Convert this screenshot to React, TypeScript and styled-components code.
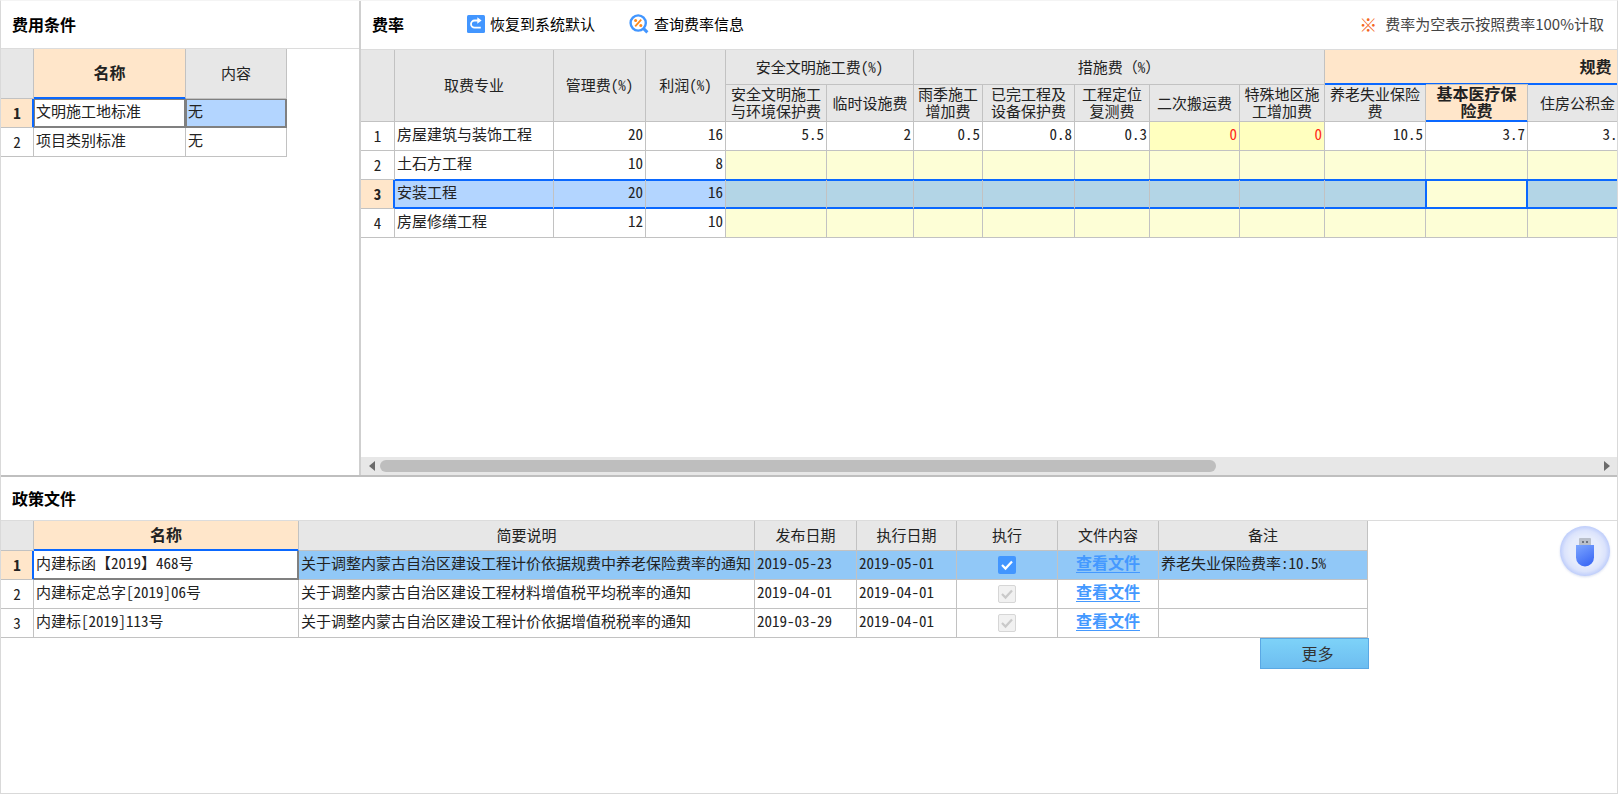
import React from 'react';
import styled, { createGlobalStyle, css } from 'styled-components';

const LINE = '#c2c2c2';
const BLUE = '#0a68ff';
const HEAD = '#e7e7e7';
const PEACH = '#ffe6ca';
const YELLOW = '#fdfed6';
const DARK = '#808080';

const GlobalStyle = createGlobalStyle`
  *, *::before, *::after { box-sizing: border-box; }
  body {
    margin: 0;
    background: #fff;
    color: #222;
    font-family: "Noto Sans CJK SC", "Liberation Sans", sans-serif;
    font-size: 15px;
    line-height: 17px;
  }
`;

const Page = styled.main`
  position: relative;
  display: grid;
  grid-template-rows: 60vh 1fr;
  grid-template-columns: minmax(0, 1fr);
  min-height: 100vh;
  border: 1px solid #d9d9d9;
  border-top-color: #f4f4f4;
`;

const TopPane = styled.div`
  display: flex;
  min-height: 0;
  border-bottom: 2px solid #bfbfbf;
`;

const Panel = styled.section`
  display: flex;
  flex-direction: column;
  min-width: 0;
`;

const ConditionPanel = styled(Panel)`
  flex: 0 0 360px;
  border-right: 2px solid #cfcfcf;
`;

const RatePanel = styled(Panel)`
  flex: 1;
`;

const PanelHeader = styled.header<{ $height: number }>`
  display: flex;
  align-items: center;
  flex: none;
  height: ${(p) => p.$height}px;
  padding: 0 13px 2px 11px;
  border-bottom: 1px solid #dcdcdc;
  color: #000;
`;

const Title = styled.h2`
  margin: 0;
  font-size: 16px;
  line-height: 20px;
  font-weight: 700;
`;

const Tools = styled.div`
  display: flex;
  gap: 34px;
  margin-left: 63px;
`;

const ToolButton = styled.button`
  display: flex;
  align-items: center;
  gap: 5px;
  padding: 0;
  border: 0;
  background: none;
  color: #000;
  font: inherit;
  line-height: 20px;
  white-space: nowrap;
  cursor: pointer;
`;

const Note = styled.p`
  display: flex;
  gap: 8px;
  margin: 0 0 0 auto;
  color: #444;
  line-height: 20px;
  white-space: nowrap;
`;

const NoteMark = styled.span`
  color: #f4661e;
  font-size: 18px;
`;

const TableArea = styled.div`
  flex: 1;
  min-height: 0;
  overflow: hidden;
`;

const Grid = styled.table<{ $width: number }>`
  width: ${(p) => p.$width}px;
  table-layout: fixed;
  border-collapse: separate;
  border-spacing: 0;
  font-feature-settings: "hwid" 1;
`;

const FullWidth = styled.span`
  font-feature-settings: normal;
`;

const HeadRow = styled.tr<{ $height: number }>`
  height: ${(p) => p.$height}px;
`;

const HeadCell = styled.th<{ $active?: boolean; $nested?: boolean }>`
  padding: 0 3px 2px;
  border-right: 1px solid ${LINE};
  border-bottom: 1px solid ${LINE};
  background: ${HEAD};
  font-weight: 400;
  ${(p) =>
    p.$active &&
    css`
      background: ${PEACH};
      border-bottom-color: ${BLUE};
      box-shadow: inset 0 -1px 0 ${BLUE};
      font-size: 16px;
      font-weight: 700;
    `}
  ${(p) =>
    p.$active &&
    p.$nested &&
    css`
      box-shadow: 0 -1px 0 ${LINE}, inset 0 -1px 0 ${BLUE};
    `}
`;

const BodyRow = styled.tr`
  height: 29px;
`;

const IndexCell = styled.th<{ $active?: boolean }>`
  padding: 0 0 2px;
  border-right: 1px solid ${LINE};
  border-bottom: 1px solid ${LINE};
  font-weight: 400;
  ${(p) =>
    p.$active &&
    css`
      background: ${PEACH};
      border-right-color: ${BLUE};
      box-shadow: inset -1px 0 0 ${BLUE};
      font-weight: 700;
    `}
`;

type Frame = 'row' | 'current' | 'dark' | 'corner';

const frames: Record<Frame, ReturnType<typeof css>> = {
  row: css`
    border-bottom-color: ${BLUE};
    box-shadow: 0 -1px 0 ${BLUE}, inset 0 1px 0 ${BLUE}, inset 0 -1px 0 ${BLUE};
  `,
  current: css`
    border-bottom-color: ${BLUE};
    border-right-color: ${BLUE};
    box-shadow: 0 -1px 0 ${BLUE}, -1px 0 0 ${BLUE}, inset 0 0 0 1px ${BLUE};
  `,
  dark: css`
    border-color: ${DARK};
    box-shadow: inset 0 0 0 1px ${DARK};
  `,
  corner: css`
    border-color: ${DARK};
    box-shadow: inset -1px -1px 0 ${DARK};
  `,
};

const Cell = styled.td<{
  $align?: 'left' | 'right' | 'center';
  $bg?: string;
  $ink?: string;
  $frame?: Frame;
}>`
  padding: 0 2px 5px;
  border-right: 1px solid ${LINE};
  border-bottom: 1px solid ${LINE};
  background: ${(p) => p.$bg ?? '#fff'};
  color: ${(p) => p.$ink ?? 'inherit'};
  text-align: ${(p) => p.$align ?? 'left'};
  white-space: nowrap;
  ${(p) => p.$frame && frames[p.$frame]}
`;

const ScrollBar = styled.div`
  display: flex;
  align-items: center;
  flex: none;
  gap: 5px;
  height: 18px;
  padding: 0 7px 0 8px;
  background: ${HEAD};
`;

const ScrollTrack = styled.div`
  flex: 1;
  height: 12px;
`;

const ScrollThumb = styled.div`
  width: 68.6%;
  height: 12px;
  border-radius: 6px;
  background: #bebebe;
`;

const PolicyBody = styled.div`
  display: flex;
  flex-direction: column;
  align-self: flex-start;
`;

const FileLink = styled.a`
  color: #4499ff;
  font-size: 16px;
  font-weight: 700;
  text-decoration: underline;
  text-underline-offset: 3px;
  text-decoration-thickness: 1px;
`;

const Check = styled.label`
  display: inline-grid;
  width: 18px;
  height: 18px;
  vertical-align: middle;
  margin-top: 4px;

  input,
  svg {
    grid-area: 1 / 1;
    width: 18px;
    height: 18px;
    margin: 0;
  }
  input {
    appearance: none;
    border-radius: 2px;
    background: #4296ff;
  }
  input:disabled {
    border: 1px solid #d6d6d6;
    background: #f1f1f1;
  }
  svg {
    pointer-events: none;
    color: #fff;
  }
  input:disabled + svg {
    color: #c9c9c9;
  }
`;

const MoreButton = styled.button`
  align-self: flex-end;
  width: 109px;
  height: 31px;
  margin-right: -1px;
  padding: 0 0 0 6px;
  border: 1px solid #5aa8e4;
  background: linear-gradient(#7dd2f8, #6dbdf0);
  color: #333;
  font: inherit;
  font-size: 16px;
  cursor: pointer;
`;

const DeviceButton = styled.button`
  position: absolute;
  right: 4px;
  bottom: 212px;
  width: 56px;
  height: 58px;
  padding: 0;
  border: 0;
  background: none;
  cursor: pointer;

  svg {
    display: block;
  }
`;

const Columns = ({ widths }: { widths: number[] }) => (
  <colgroup>
    {widths.map((w, i) => (
      <col key={i} style={{ width: w }} />
    ))}
  </colgroup>
);

const sum = (values: number[]) => values.reduce((a, b) => a + b, 0);

const ResetIcon = () => (
  <svg width="18" height="18" viewBox="0 0 18 18" aria-hidden="true">
    <rect width="18" height="18" rx="1.5" fill="#4296ff" />
    <path d="M11 5.5H7.6a3.6 3.6 0 0 0 0 7.2h6.2" fill="none" stroke="#fff" strokeWidth="1.8" />
    <path d="M10.3 2.3 14.6 5.5l-4.3 3.2z" fill="#fff" />
  </svg>
);

const QueryIcon = () => (
  <svg width="20" height="20" viewBox="0 0 20 20" aria-hidden="true">
    <circle cx="9.2" cy="9" r="7.6" fill="#fff" stroke="#4296ff" strokeWidth="2.4" />
    <path d="m14.6 14.6 3.8 3.8" stroke="#4296ff" strokeWidth="3" />
    <path d="m12.2 5.6-6 6.8" stroke="#ff8a1c" strokeWidth="1.8" />
    <circle cx="6.6" cy="6.6" r="1.5" fill="#ff8a1c" />
    <circle cx="11.8" cy="11.4" r="1.5" fill="#ff8a1c" />
  </svg>
);

const DeviceIcon = () => (
  <svg width="56" height="58" viewBox="0 0 56 58" aria-hidden="true">
    <defs>
      <radialGradient id="halo">
        <stop offset="0.6" stopColor="#e6ecfc" />
        <stop offset="0.82" stopColor="#dbe3fc" />
        <stop offset="1" stopColor="#becdfb" />
      </radialGradient>
      <linearGradient id="stick" x1="0" y1="0" x2="0.5" y2="1">
        <stop offset="0" stopColor="#7da6ff" />
        <stop offset="1" stopColor="#3f6cf5" />
      </linearGradient>
      <filter id="shade" x="-20%" y="-20%" width="140%" height="140%">
        <feDropShadow dx="0" dy="1" stdDeviation="1.2" floodColor="#8fa2d8" floodOpacity="0.35" />
      </filter>
    </defs>
    <circle cx="28" cy="28" r="25" fill="url(#halo)" filter="url(#shade)" />
    <rect x="22" y="15" width="12" height="8" rx="1" fill="#b9bfca" />
    <rect x="25" y="18" width="2" height="2" fill="#6d7482" />
    <rect x="29" y="18" width="2" height="2" fill="#6d7482" />
    <path d="M19 22h18v12.500a9 9 0 0 1-18 0z" fill="url(#stick)" />
  </svg>
);

const CheckMark = () => (
  <svg viewBox="0 0 18 18" aria-hidden="true">
    <path d="m4 9 3.500 3.600L14 5.400" fill="none" stroke="currentColor" strokeWidth="2.200" />
  </svg>
);

const conditionCols = [33, 152, 101];
const conditions = [
  { name: '文明施工地标准', value: '无' },
  { name: '项目类别标准', value: '无' },
];

const ConditionTable = () => (
  <Grid $width={sum(conditionCols)}>
    <Columns widths={conditionCols} />
    <thead>
      <HeadRow $height={50}>
        <HeadCell aria-label="序号" />
        <HeadCell $active>名称</HeadCell>
        <HeadCell>内容</HeadCell>
      </HeadRow>
    </thead>
    <tbody>
      {conditions.map((row, i) => (
        <BodyRow key={row.name}>
          <IndexCell $active={i === 0}>{i + 1}</IndexCell>
          <Cell $frame={i === 0 ? 'dark' : undefined}>{row.name}</Cell>
          <Cell $frame={i === 0 ? 'dark' : undefined} $bg={i === 0 ? '#b3d5ff' : undefined}>
            {row.value}
          </Cell>
        </BodyRow>
      ))}
    </tbody>
  </Grid>
);

const rateCols = [34, 159, 92, 80, 101, 87, 69, 92, 75, 90, 85, 101, 102, 100, 239];
const CURRENT_COL = 9;
const SELECTED_ROW = 2;
const rates = [
  { name: '房屋建筑与装饰工程', manage: '20', profit: '16', fees: ['5.5', '2', '0.5', '0.8', '0.3', '0', '0', '10.5', '3.7', '3.7', ''] },
  { name: '土石方工程', manage: '10', profit: '8', fees: Array(11).fill('') },
  { name: '安装工程', manage: '20', profit: '16', fees: Array(11).fill('') },
  { name: '房屋修缮工程', manage: '12', profit: '10', fees: Array(11).fill('') },
];
const feeNames = [
  '安全文明施工与环境保护费',
  '临时设施费',
  '雨季施工增加费',
  '已完工程及设备保护费',
  '工程定位复测费',
  '二次搬运费',
  '特殊地区施工增加费',
  '养老失业保险费',
  '基本医疗保险费',
  '住房公积金',
  '',
];

const feeBackground = (value: string, selected: boolean, current: boolean) => {
  if (current) return YELLOW;
  if (selected) return '#b3d5e6';
  if (value === '0') return '#ffffbf';
  return value === '' ? YELLOW : '#fff';
};

const RateTable = () => (
  <Grid $width={sum(rateCols)}>
    <Columns widths={rateCols} />
    <thead>
      <HeadRow $height={35}>
        <HeadCell rowSpan={2} aria-label="序号" />
        <HeadCell rowSpan={2}>取费专业</HeadCell>
        <HeadCell rowSpan={2}>管理费(%)</HeadCell>
        <HeadCell rowSpan={2}>利润(%)</HeadCell>
        <HeadCell colSpan={2}>安全文明施工费(%)</HeadCell>
        <HeadCell colSpan={5}>
          措施费<FullWidth>（</FullWidth>%<FullWidth>）</FullWidth>
        </HeadCell>
        <HeadCell colSpan={4} $active>规费</HeadCell>
      </HeadRow>
      <HeadRow $height={37}>
        {feeNames.map((name, i) => (
          <HeadCell key={i} $active={i === CURRENT_COL - 1} $nested>
            {name}
          </HeadCell>
        ))}
      </HeadRow>
    </thead>
    <tbody>
      {rates.map((row, r) => {
        const selected = r === SELECTED_ROW;
        const frame: Frame | undefined = selected ? 'row' : undefined;
        const bg = selected ? '#b3d5ff' : undefined;
        return (
          <BodyRow key={row.name}>
            <IndexCell $active={selected}>{r + 1}</IndexCell>
            <Cell $frame={frame} $bg={bg}>{row.name}</Cell>
            <Cell $frame={frame} $bg={bg} $align="right">{row.manage}</Cell>
            <Cell $frame={frame} $bg={bg} $align="right">{row.profit}</Cell>
            {row.fees.map((value: string, c: number) => {
              const current = selected && c === CURRENT_COL - 1;
              return (
                <Cell
                  key={c}
                  $align="right"
                  $frame={current ? 'current' : frame}
                  $bg={feeBackground(value, selected, current)}
                  $ink={value === '0' ? '#ff2a1a' : undefined}
                >
                  {value}
                </Cell>
              );
            })}
          </BodyRow>
        );
      })}
    </tbody>
  </Grid>
);

const policyCols = [33, 265, 456, 102, 100, 101, 101, 209];
const policies = [
  { name: '内建标函【2019】468号', brief: '关于调整内蒙古自治区建设工程计价依据规费中养老保险费率的通知', issued: '2019-05-23', effective: '2019-05-01', remark: '养老失业保险费率:10.5%' },
  { name: '内建标定总字[2019]06号', brief: '关于调整内蒙古自治区建设工程材料增值税平均税率的通知', issued: '2019-04-01', effective: '2019-04-01', remark: '' },
  { name: '内建标[2019]113号', brief: '关于调整内蒙古自治区建设工程计价依据增值税税率的通知', issued: '2019-03-29', effective: '2019-04-01', remark: '' },
];

const PolicyTable = () => (
  <Grid $width={sum(policyCols)}>
    <Columns widths={policyCols} />
    <thead>
      <HeadRow $height={30}>
        <HeadCell aria-label="序号" />
        <HeadCell $active>名称</HeadCell>
        <HeadCell>简要说明</HeadCell>
        <HeadCell>发布日期</HeadCell>
        <HeadCell>执行日期</HeadCell>
        <HeadCell>执行</HeadCell>
        <HeadCell>文件内容</HeadCell>
        <HeadCell>备注</HeadCell>
      </HeadRow>
    </thead>
    <tbody>
      {policies.map((row, i) => {
        const bg = i === 0 ? '#91c8f7' : undefined;
        return (
          <BodyRow key={row.name}>
            <IndexCell $active={i === 0}>{i + 1}</IndexCell>
            <Cell $frame={i === 0 ? 'corner' : undefined}>{row.name}</Cell>
            <Cell $bg={bg}>{row.brief}</Cell>
            <Cell $bg={bg}>{row.issued}</Cell>
            <Cell $bg={bg}>{row.effective}</Cell>
            <Cell $bg={bg} $align="center">
              <Check>
                <input type="checkbox" defaultChecked disabled={i > 0} aria-label={`执行 ${row.name}`} />
                <CheckMark />
              </Check>
            </Cell>
            <Cell $bg={bg} $align="center">
              <FileLink href="#">查看文件</FileLink>
            </Cell>
            <Cell $bg={bg}>{row.remark}</Cell>
          </BodyRow>
        );
      })}
    </tbody>
  </Grid>
);

export default function App() {
  return (
    <>
      <GlobalStyle />
      <Page>
        <TopPane>
          <ConditionPanel>
            <PanelHeader $height={48}>
              <Title>费用条件</Title>
            </PanelHeader>
            <TableArea>
              <ConditionTable />
            </TableArea>
          </ConditionPanel>
          <RatePanel>
            <PanelHeader $height={49}>
              <Title>费率</Title>
              <Tools>
                <ToolButton type="button">
                  <ResetIcon />
                  恢复到系统默认
                </ToolButton>
                <ToolButton type="button">
                  <QueryIcon />
                  查询费率信息
                </ToolButton>
              </Tools>
              <Note>
                <NoteMark>※</NoteMark>
                费率为空表示按照费率100%计取
              </Note>
            </PanelHeader>
            <TableArea>
              <RateTable />
            </TableArea>
            <ScrollBar>
              <svg width="6" height="12" viewBox="0 0 6 12" aria-hidden="true">
                <path d="M6 1v10L0 6z" fill="#6b6b6b" />
              </svg>
              <ScrollTrack>
                <ScrollThumb />
              </ScrollTrack>
              <svg width="6" height="12" viewBox="0 0 6 12" aria-hidden="true">
                <path d="M0 1v10l6-5z" fill="#6b6b6b" />
              </svg>
            </ScrollBar>
          </RatePanel>
        </TopPane>
        <Panel>
          <PanelHeader $height={44}>
            <Title>政策文件</Title>
          </PanelHeader>
          <PolicyBody>
            <PolicyTable />
            <MoreButton type="button">更多</MoreButton>
          </PolicyBody>
        </Panel>
        <DeviceButton type="button" aria-label="加密锁">
          <DeviceIcon />
        </DeviceButton>
      </Page>
    </>
  );
}
